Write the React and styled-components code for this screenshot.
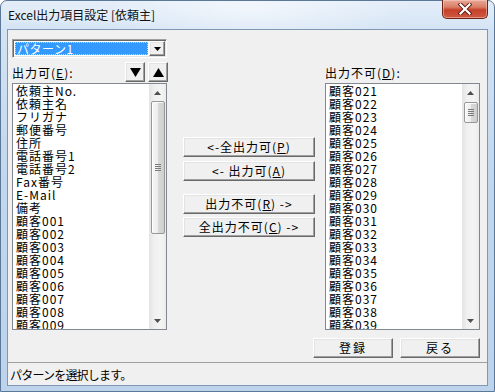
import React from "react";
import styled, { createGlobalStyle } from "styled-components";

const GlobalStyle = createGlobalStyle`
  html, body {
    margin: 0;
    padding: 0;
    background: #fff;
  }
  body {
    font-family: "Noto Sans CJK JP", "Noto Sans", sans-serif;
    font-size: 12px;
    color: #000;
  }
`;

const Window = styled.div`
  width: 495px;
  height: 392px;
  box-sizing: border-box;
  display: flex;
  flex-direction: column;
  padding: 0 6px 5px 6px;
  border: 1px solid #5b7898;
  border-radius: 7px 7px 0 0;
  background:
    radial-gradient(ellipse 160px 40px at 250px 8px, rgba(255, 255, 255, 0.55), transparent),
    linear-gradient(180deg, #e4eef9 0%, #d3e3f4 8%, #c2d7ed 45%, #bcd3eb 100%);
`;

const TitleBar = styled.div`
  height: 28px;
  flex: none;
  display: flex;
  justify-content: space-between;
  padding-left: 1px;
`;

const Title = styled.div`
  align-self: center;
  font-size: 12px;
  line-height: 14px;
  color: #111;
  text-shadow: 0 0 6px rgba(255, 255, 255, 0.9);
`;

const CloseButton = styled.div`
  width: 46px;
  height: 19px;
  box-sizing: border-box;
  margin-top: -1px;
  display: flex;
  align-items: center;
  justify-content: center;
  border: 1px solid #6b2518;
  border-top: none;
  border-radius: 0 0 5px 5px;
  background: linear-gradient(180deg, #e9a897 0%, #d97d66 40%, #c5402a 55%, #cf5a42 100%);
  box-shadow: inset 0 0 0 1px rgba(255, 220, 210, 0.45);
`;

const Client = styled.div`
  flex: 1;
  display: flex;
  flex-direction: column;
  background: #f0f0f0;
  border: 1px solid #7f97b3;
`;

const Content = styled.div`
  flex: 1;
  display: flex;
  flex-direction: column;
  padding: 9px 7px 4px 4px;
`;

const Columns = styled.div`
  display: grid;
  grid-template-columns: 155px 1fr 155px;
  grid-template-rows: 19px 25px 247px;
  grid-template-areas:
    "combo . ."
    "lhead . rhead"
    "llist mid rlist";
`;

const Combo = styled.div`
  grid-area: combo;
  display: flex;
  box-sizing: border-box;
  padding: 1px;
  background: #fff;
  border: 1px solid;
  border-color: #a0a0a0 #fff #fff #a0a0a0;
  box-shadow: inset 1px 1px #696969, inset -1px -1px #e3e3e3;
`;

const ComboValue = styled.div`
  flex: 1;
  margin: 1px 1px 1px 1px;
  padding-left: 2px;
  background: #3399ff;
  color: #fff;
  line-height: 13px;
  outline: 1px dotted #ffd36b;
  outline-offset: -1px;
  letter-spacing: 0.5px;
`;

const RaisedButton = styled.div`
  box-sizing: border-box;
  display: flex;
  align-items: center;
  justify-content: center;
  background: #f0f0f0;
  border: 1px solid;
  border-color: #fff #696969 #696969 #fff;
  box-shadow: inset -1px -1px #a0a0a0, inset 1px 1px #e3e3e3;
  letter-spacing: 1px;
  white-space: pre;
  line-height: 14px;
`;

const DropButton = styled(RaisedButton)`
  width: 16px;
  flex: none;
`;

const ListHeader = styled.div`
  grid-area: ${(p) => p.$area};
  display: flex;
  align-items: flex-end;
  justify-content: space-between;
  padding-bottom: 1px;
`;

const Label = styled.div`
  letter-spacing: 1px;
  line-height: 14px;
  padding-bottom: 2px;
`;

const ArrowGroup = styled.div`
  display: flex;
  gap: 3px;
  margin-right: -1px;
`;

const ArrowButton = styled(RaisedButton)`
  width: 20px;
  height: 20px;
`;

const ListBox = styled.div`
  grid-area: ${(p) => p.$area};
  display: flex;
  overflow: hidden;
  background: #fff;
  border: 1px solid #828790;
`;

const Items = styled.div`
  flex: 1;
  overflow: hidden;
  padding-left: 3px;
`;

const Item = styled.div`
  height: 13px;
  line-height: 13px;
  letter-spacing: 1px;
  white-space: nowrap;
`;

const ScrollBar = styled.div`
  width: 17px;
  flex: none;
  display: flex;
  flex-direction: column;
  background: linear-gradient(90deg, #e3e3e3 0%, #f0f0f0 30%, #f4f4f4 70%, #ececec 100%);
`;

const ScrollArrow = styled.div`
  height: 17px;
  flex: none;
  display: flex;
  align-items: center;
  justify-content: center;
`;

const Track = styled.div`
  flex: 1;
  display: flex;
  flex-direction: column;
  align-items: center;
  padding-top: ${(p) => p.$offset}px;
`;

const Thumb = styled.div`
  width: 14px;
  height: ${(p) => p.$size}px;
  box-sizing: border-box;
  display: flex;
  align-items: center;
  justify-content: center;
  border: 1px solid #979797;
  border-radius: 2px;
  background: linear-gradient(90deg, #f7f7f7 0%, #ececec 50%, #d9d9d9 51%, #cfcfcf 100%);
  box-shadow: inset 1px 1px rgba(255, 255, 255, 0.8);
`;

const Middle = styled.div`
  grid-area: mid;
  display: flex;
  flex-direction: column;
  padding: 54px 10px 0 16px;
`;

const MoveButton = styled(RaisedButton)`
  height: 20px;
  margin-top: ${(p) => p.$gap}px;
`;

const Footer = styled.div`
  display: flex;
  justify-content: flex-end;
  gap: 7px;
  margin-top: 8px;
`;

const DialogButton = styled(RaisedButton)`
  width: 80px;
  height: 20px;
  letter-spacing: 2px;
`;

const StatusBar = styled.div`
  height: 22px;
  flex: none;
  display: flex;
  align-items: center;
  padding-left: 2px;
  border-top: 1px solid #a0a0a0;
  letter-spacing: -0.8px;
`;

const TriDown = ({ w = 7, h = 4, color = "#000" }) => (
  <svg width={w} height={h} viewBox={`0 0 ${w} ${h}`}>
    <polygon points={`0,0 ${w},0 ${w / 2},${h}`} fill={color} />
  </svg>
);

const TriUp = ({ w = 7, h = 4, color = "#000" }) => (
  <svg width={w} height={h} viewBox={`0 0 ${w} ${h}`}>
    <polygon points={`0,${h} ${w},${h} ${w / 2},0`} fill={color} />
  </svg>
);

const Grip = () => (
  <svg width="6" height="7" viewBox="0 0 6 7">
    {[0, 2, 4, 6].map((y) => (
      <line key={y} x1="0" x2="6" y1={y + 0.5} y2={y + 0.5} stroke="#7a7a7a" strokeWidth="1" />
    ))}
  </svg>
);

const CloseGlyph = () => (
  <svg width="14" height="12" viewBox="0 0 14 12">
    <path d="M2.5 1.5 L11.5 10.5 M11.5 1.5 L2.5 10.5" stroke="#5a1a10" strokeWidth="4" strokeLinecap="square" />
    <path d="M2.5 1.5 L11.5 10.5 M11.5 1.5 L2.5 10.5" stroke="#fff" strokeWidth="2.2" strokeLinecap="square" />
  </svg>
);

const Scroll = ({ offset, size }) => (
  <ScrollBar>
    <ScrollArrow>
      <TriUp color="#4f4f4f" />
    </ScrollArrow>
    <Track $offset={offset}>
      <Thumb $size={size}>
        <Grip />
      </Thumb>
    </Track>
    <ScrollArrow>
      <TriDown color="#4f4f4f" />
    </ScrollArrow>
  </ScrollBar>
);

const pad = (n) => String(n).padStart(3, "0");

const leftItems = [
  "依頼主No.",
  "依頼主名",
  "フリガナ",
  "郵便番号",
  "住所",
  "電話番号1",
  "電話番号2",
  "Fax番号",
  "E-Mail",
  "備考",
  ...Array.from({ length: 9 }, (_, i) => `顧客${pad(i + 1)}`),
];

const rightItems = Array.from({ length: 19 }, (_, i) => `顧客${pad(i + 21)}`);

export default function App() {
  return (
    <>
      <GlobalStyle />
      <Window>
        <TitleBar>
          <Title>Excel出力項目設定 [依頼主]</Title>
          <CloseButton>
            <CloseGlyph />
          </CloseButton>
        </TitleBar>
        <Client>
          <Content>
            <Columns>
              <Combo>
                <ComboValue>パターン1</ComboValue>
                <DropButton>
                  <TriDown />
                </DropButton>
              </Combo>

              <ListHeader $area="lhead">
                <Label>
                  出力可(<u>E</u>):
                </Label>
                <ArrowGroup>
                  <ArrowButton>
                    <TriDown w={11} h={9} />
                  </ArrowButton>
                  <ArrowButton>
                    <TriUp w={11} h={9} />
                  </ArrowButton>
                </ArrowGroup>
              </ListHeader>

              <ListHeader $area="rhead">
                <Label>
                  出力不可(<u>D</u>):
                </Label>
              </ListHeader>

              <ListBox $area="llist">
                <Items>
                  {leftItems.map((t) => (
                    <Item key={t}>{t}</Item>
                  ))}
                </Items>
                <Scroll offset={0} size={133} />
              </ListBox>

              <Middle>
                <MoveButton $gap={0}>
                  {"<-全出力可("}
                  <u>P</u>)
                </MoveButton>
                <MoveButton $gap={4}>
                  {"<- 出力可("}
                  <u>A</u>)
                </MoveButton>
                <MoveButton $gap={13}>
                  出力不可(<u>R</u>){" ->"}
                </MoveButton>
                <MoveButton $gap={3}>
                  全出力不可(<u>C</u>){" ->"}
                </MoveButton>
              </Middle>

              <ListBox $area="rlist">
                <Items>
                  {rightItems.map((t) => (
                    <Item key={t}>{t}</Item>
                  ))}
                </Items>
                <Scroll offset={1} size={21} />
              </ListBox>
            </Columns>

            <Footer>
              <DialogButton>登録</DialogButton>
              <DialogButton>戻る</DialogButton>
            </Footer>
          </Content>
          <StatusBar>パターンを選択します。</StatusBar>
        </Client>
      </Window>
    </>
  );
}
